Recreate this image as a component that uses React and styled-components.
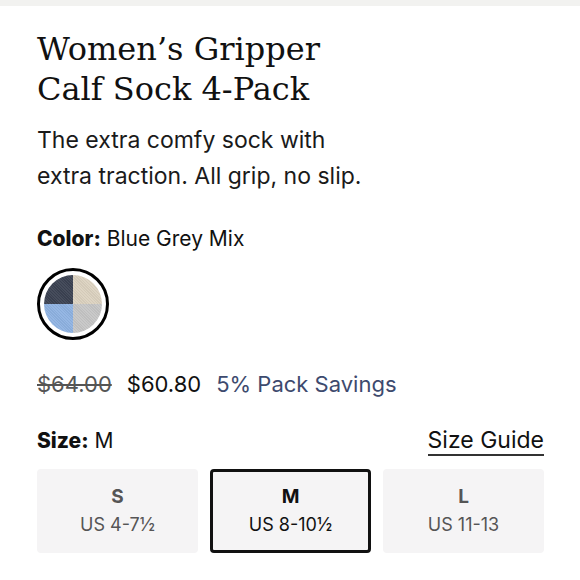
import React from 'react';
import styled, { createGlobalStyle } from 'styled-components';

const GlobalStyle = createGlobalStyle`
    body {
        margin: 0;
        background: #ffffff;
        font-family: Inter, "Noto Sans", sans-serif;
        color: #1a1a1a;
    }
`;

const sizes = [
    { code: 'S', range: 'US 4-7½' },
    { code: 'M', range: 'US 8-10½' },
    { code: 'L', range: 'US 11-13' },
];

const App = () => {
    const selected = 'M';
    return (
        <>
            <GlobalStyle />
            <TopBar />
            <Product>
                <Title>
                    Women’s Gripper
                    <br />Calf Sock 4-Pack
                </Title>
                <Description>
                    The extra comfy sock with
                    <br />extra traction. All grip, no slip.
                </Description>
                <ColorLabel>
                    <b>Color:</b> Blue Grey Mix
                </ColorLabel>
                <Swatch>
                    <SwatchInner>
                        <Quarter $c="#3b4252" />
                        <Quarter $c="#dcd2c0" />
                        <Quarter $c="#8fb3e2" />
                        <Quarter $c="#c6c6c6" />
                    </SwatchInner>
                </Swatch>
                <PriceRow>
                    <OldPrice>$64.00</OldPrice>
                    <Price>$60.80</Price>
                    <Savings>5% Pack Savings</Savings>
                </PriceRow>
                <SizeHeader>
                    <Label>
                        <b>Size:</b> M
                    </Label>
                    <GuideLink>Size Guide</GuideLink>
                </SizeHeader>
                <SizeGrid>
                    {sizes.map((s) => (
                        <SizeButton key={s.code} $active={s.code === selected}>
                            <SizeCode>{s.code}</SizeCode>
                            <SizeRange>{s.range}</SizeRange>
                        </SizeButton>
                    ))}
                </SizeGrid>
            </Product>
        </>
    );
};

const TopBar = styled.div`
    height: 6px;
    background: #f2f2f0;
`;

const Product = styled.div`
    padding: 0 36px 0 37px;
`;

const Title = styled.h1`
    margin: 23px 0 0;
    font-family: "DejaVu Serif", serif;
    font-weight: 400;
    font-size: 32px;
    line-height: 40px;
    color: #111;
`;

const Description = styled.p`
    margin: 13px 0 0;
    font-size: 23px;
    line-height: 36px;
    color: #1a1a1a;
`;

const Label = styled.div`
    font-size: 21px;
    line-height: 24px;
    color: #111;
    b {
        font-weight: 800;
    }
`;

const ColorLabel = styled(Label)`
    margin-top: 33px;
`;

const Swatch = styled.div`
    margin-top: 17px;
    width: 66px;
    height: 66px;
    border: 3px solid #000;
    border-radius: 50%;
    display: flex;
    align-items: center;
    justify-content: center;
`;

const SwatchInner = styled.div`
    width: 58px;
    height: 58px;
    border-radius: 50%;
    overflow: hidden;
    display: grid;
    grid-template-columns: 1fr 1fr;
    grid-template-rows: 1fr 1fr;
`;

const Quarter = styled.div`
    background-color: ${(p) => p.$c};
    background-image: repeating-linear-gradient(
        45deg,
        rgba(255, 255, 255, 0.06) 0 1px,
        rgba(0, 0, 0, 0.04) 1px 2px
    );
`;

const PriceRow = styled.div`
    margin-top: 30px;
    display: flex;
    align-items: baseline;
    gap: 15px;
    font-size: 22px;
    line-height: 28px;
`;

const OldPrice = styled.span`
    color: #555;
    text-decoration: line-through;
`;

const Price = styled.span`
    color: #111;
`;

const Savings = styled.span`
    color: #3d4a6e;
`;

const SizeHeader = styled.div`
    margin-top: 30px;
    display: flex;
    justify-content: space-between;
    align-items: baseline;
`;

const GuideLink = styled.a`
    font-size: 23px;
    line-height: 24px;
    color: #111;
    padding-bottom: 2px;
    border-bottom: 2px solid #333;
    cursor: pointer;
`;

const SizeGrid = styled.div`
    margin-top: 13px;
    display: grid;
    grid-template-columns: repeat(3, 1fr);
    gap: 12px;
`;

const SizeButton = styled.div`
    height: 84px;
    box-sizing: border-box;
    background: #f5f4f5;
    border: 3px solid ${(p) => (p.$active ? '#111' : 'transparent')};
    border-radius: 4px;
    display: flex;
    flex-direction: column;
    align-items: center;
    justify-content: center;
    color: ${(p) => (p.$active ? '#111' : '#555')};
`;

const SizeCode = styled.div`
    font-size: 19px;
    font-weight: 700;
    line-height: 28px;
`;

const SizeRange = styled.div`
    font-size: 18px;
    line-height: 28px;
`;

export default App;
